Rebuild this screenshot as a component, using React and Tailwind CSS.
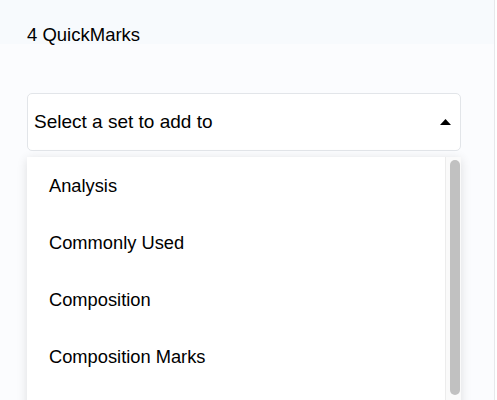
const sets = ["Analysis", "Commonly Used", "Composition", "Composition Marks"];

const App = () => {
  return (
    <div
      className="flex h-[400px] w-full overflow-hidden bg-[#fbfcfe] text-black"
      style={{ fontFamily: '"Liberation Sans", Arial, sans-serif' }}
    >
      <div className="flex-1 flex flex-col">
        {/* Header */}
        <div className="h-[44px] bg-[#f7fafd] pl-[27px] pt-[24px]">
          <div className="text-[18.5px] leading-[22px]">4 QuickMarks</div>
        </div>

        {/* Select */}
        <div className="pl-[27px] pt-[49px] pr-[33px]">
          <div className="h-[58px] bg-white border border-[#e2e5e9] rounded-[5px] flex items-center justify-between pl-[6px] pr-[9px]">
            <span className="text-[19px]">Select a set to add to</span>
            <svg width="11" height="6" viewBox="0 0 11 6">
              <path d="M0 6 L5.5 0 L11 6 Z" fill="#000" />
            </svg>
          </div>

          {/* Dropdown */}
          <div className="mt-[6px] h-[260px] bg-white shadow-[0_2px_10px_rgba(0,0,0,0.12)] flex">
            <div className="flex-1 flex flex-col">
              {sets.map((s) => (
                <div key={s} className="h-[57px] shrink-0 flex items-center pl-[22px] text-[18.3px]">
                  {s}
                </div>
              ))}
            </div>
            <div className="w-[16px] border-l border-[#ececec] bg-[#fafafa] pt-[3px] pl-[4px]">
              <div className="w-[10px] h-[235px] rounded-full bg-[#c1c1c1]" />
            </div>
          </div>
        </div>
      </div>
      <div className="w-[3px] border-l border-[#e6e8eb] bg-white" />
    </div>
  );
};

export default App;
